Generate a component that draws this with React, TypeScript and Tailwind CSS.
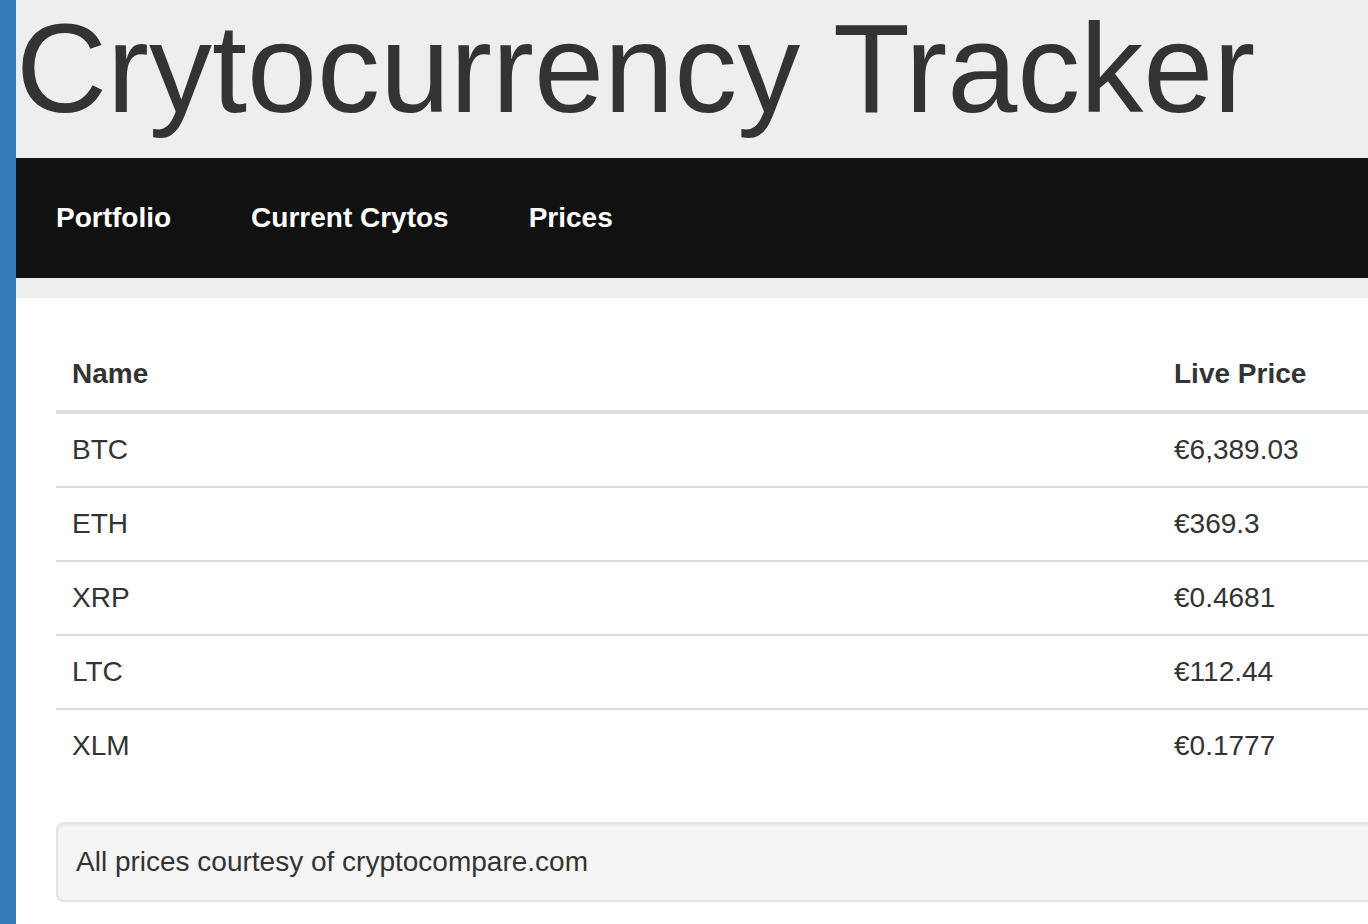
import React from 'react';

type Coin = {
  name: string;
  price: string;
};

const coins: Coin[] = [
  { name: 'BTC', price: '€6,389.03' },
  { name: 'ETH', price: '€369.3' },
  { name: 'XRP', price: '€0.4681' },
  { name: 'LTC', price: '€112.44' },
  { name: 'XLM', price: '€0.1777' },
];

const navLinks = ['Portfolio', 'Current Crytos', 'Prices'];

const App: React.FC = () => {
  return (
    <div
      className="min-h-[924px] w-full overflow-hidden border-l-[16px] border-[#337ab7] bg-white text-[#333]"
      style={{ fontFamily: '"Liberation Sans", Arial, sans-serif' }}
    >
      {/* header */}
      <div className="bg-[#eee] pb-5">
        <div className="h-[158px]">
          <h1 className="whitespace-nowrap pl-0 text-[126px] font-normal leading-[1.1] text-[#333]">
            Crytocurrency Tracker
          </h1>
        </div>

        <nav className="flex h-[120px] items-center bg-[#111]">
          {navLinks.map((link) => (
            <a
              key={link}
              href="#"
              className="px-10 text-[28px] font-bold leading-[40px] text-white"
            >
              {link}
            </a>
          ))}
        </nav>
      </div>

      {/* prices */}
      <div className="w-[1480px] pl-10 pt-10">
        <table className="w-full table-fixed border-collapse text-[28px] leading-[40px]">
          <colgroup>
            <col className="w-[1102px]" />
            <col />
          </colgroup>
          <thead>
            <tr className="border-b-4 border-[#ddd]">
              <th className="px-4 py-4 text-left font-bold">Name</th>
              <th className="px-4 py-4 text-left font-bold">Live Price</th>
            </tr>
          </thead>
          <tbody>
            {coins.map((coin, i) => (
              <tr
                key={coin.name}
                className={i < coins.length - 1 ? 'border-b-2 border-[#ddd]' : ''}
              >
                <td className="px-4 py-4">{coin.name}</td>
                <td className="px-4 py-4">{coin.price}</td>
              </tr>
            ))}
          </tbody>
        </table>

        <div className="mt-10 rounded-lg border-2 border-[#e3e3e3] bg-[#f5f5f5] px-[18px] py-[18px] text-[28px] leading-[40px] shadow-[inset_0_2px_2px_rgba(0,0,0,0.05)]">
          All prices courtesy of cryptocompare.com
        </div>
      </div>
    </div>
  );
};

export default App;
